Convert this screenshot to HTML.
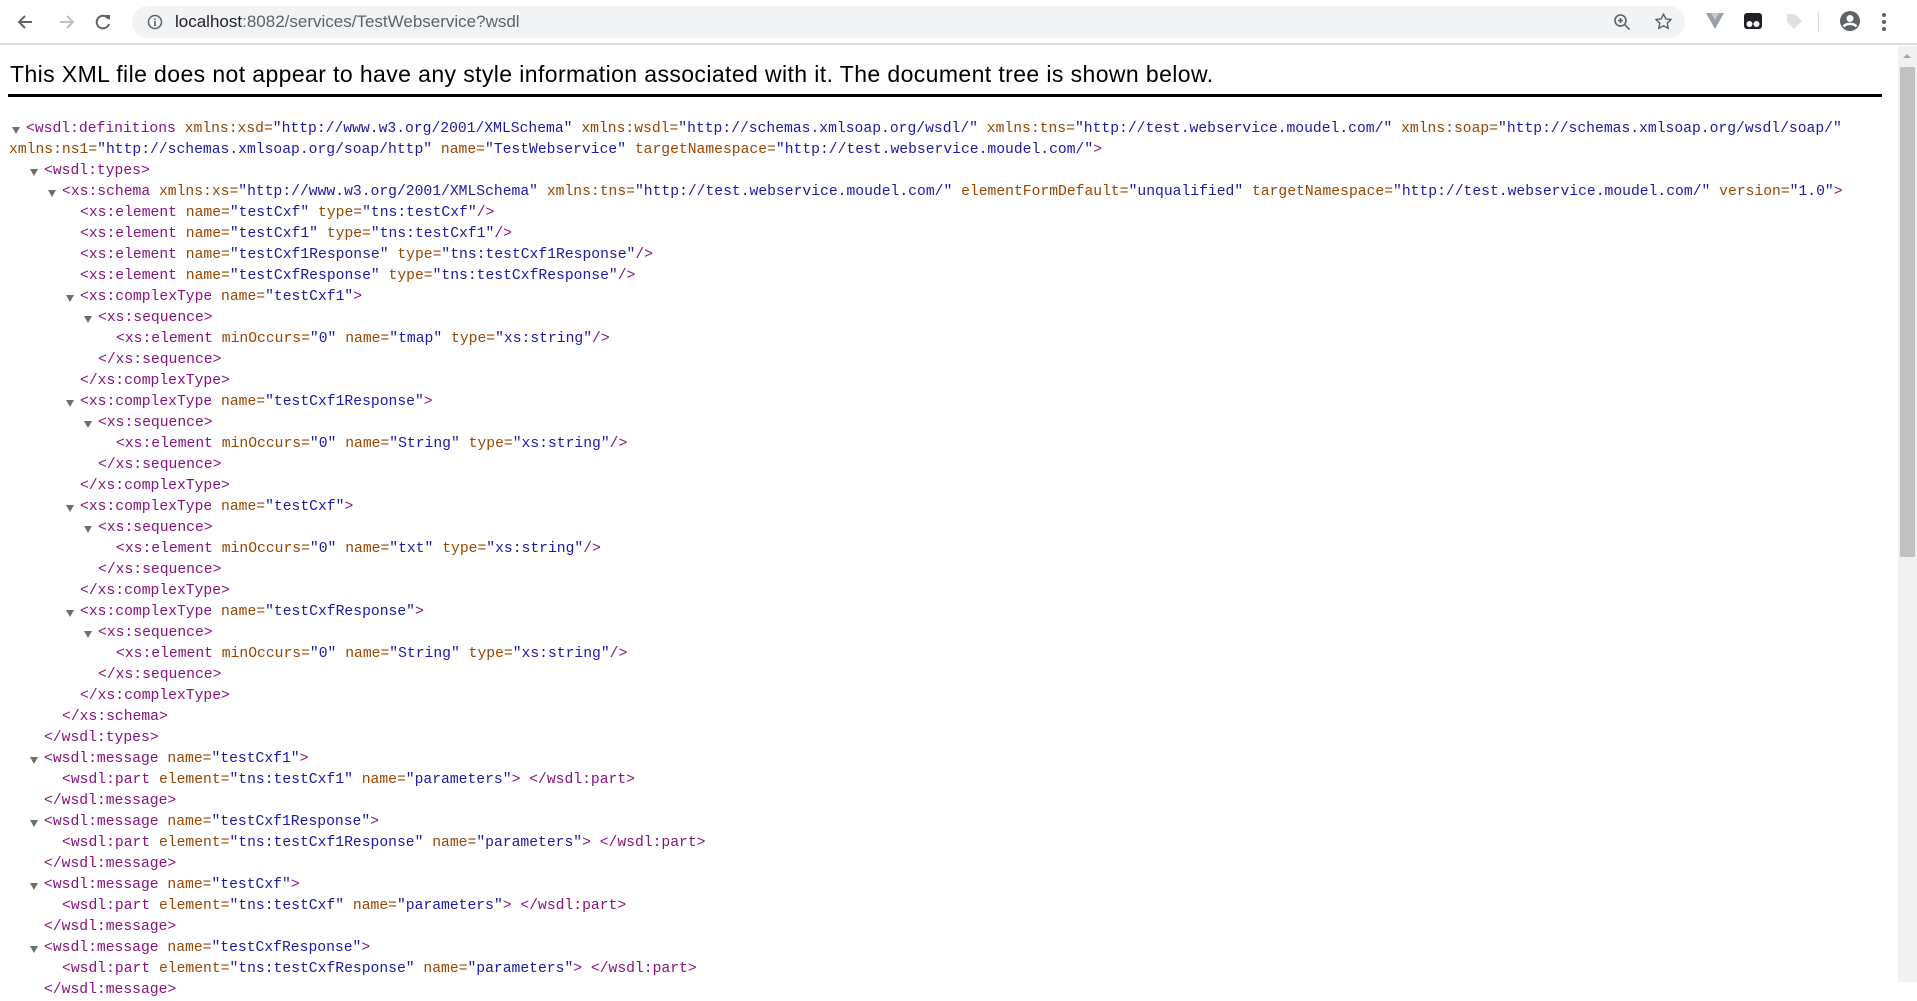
<!DOCTYPE html>
<html><head><meta charset="utf-8"><style>
*{margin:0;padding:0;box-sizing:border-box}
body{width:1917px;height:982px;overflow:hidden;background:#fff;position:relative;font-family:"Liberation Sans",sans-serif}
.bar{position:absolute;left:0;top:0;width:1917px;height:45px;background:#fff;border-bottom:2px solid #dadce0}
.pill{position:absolute;left:132px;top:6px;width:1553px;height:32px;border-radius:16px;background:#f1f3f4}
.url{position:absolute;left:175px;top:10px;font-size:17px;color:#202124;line-height:24px}
.url span{color:#5f6368}
.ic{position:absolute}
h1{position:absolute;left:10px;top:61px;font-weight:normal;font-size:23px;color:#000;white-space:nowrap;letter-spacing:0.4px}
.rule{position:absolute;left:8px;top:94px;width:1874px;height:3px;background:#000}
.sb{position:absolute;left:1898px;top:46px;width:19px;height:936px;background:#f1f1f1}
.thumb{position:absolute;left:1900px;top:67px;width:15px;height:490px;background:#c1c1c1}
.code{position:absolute;left:0;top:118.5px;font-family:"Liberation Mono",monospace;font-size:14.7px;line-height:21px;white-space:nowrap;color:#881280}
.l{position:relative;height:21px}
.t{position:absolute;width:0;height:0;border-left:4px solid transparent;border-right:4px solid transparent;border-top:7px solid #6e6e6e;top:8px}
.a{color:#994500}.v{color:#1a1aa6}
</style></head><body>
<div class="bar">
<svg class="ic" style="left:16px;top:13px" width="18" height="18" viewBox="0 0 18 18"><path d="M16 9H3M9 3L3 9l6 6" stroke="#5f6368" stroke-width="2" fill="none"/></svg>
<svg class="ic" style="left:58px;top:13px" width="18" height="18" viewBox="0 0 18 18"><path d="M2 9h13M9 3l6 6-6 6" stroke="#bdc1c6" stroke-width="2" fill="none"/></svg>
<svg class="ic" style="left:94px;top:13px" width="18" height="18" viewBox="0 0 18 18"><path d="M14.5 6A6.3 6.3 0 1 0 15 11" stroke="#5f6368" stroke-width="2" fill="none"/><path d="M11 2h5v5z" fill="#5f6368"/></svg>
<div class="pill"></div>
<svg class="ic" style="left:147px;top:14px" width="16" height="16" viewBox="0 0 16 16"><circle cx="8" cy="8" r="6.5" stroke="#5f6368" stroke-width="1.5" fill="none"/><path d="M8 7v5M8 4.5v1.5" stroke="#5f6368" stroke-width="1.6"/></svg>
<div class="url">localhost<span>:8082/services/TestWebservice?wsdl</span></div>
<svg class="ic" style="left:1613px;top:13px" width="18" height="18" viewBox="0 0 18 18"><circle cx="7.5" cy="7.5" r="5.5" stroke="#5f6368" stroke-width="1.6" fill="none"/><path d="M11.5 11.5l5 5M7.5 5v5M5 7.5h5" stroke="#5f6368" stroke-width="1.6"/></svg>
<svg class="ic" style="left:1654px;top:12px" width="19" height="19" viewBox="0 0 24 24"><path d="M12 2.5l2.9 6.3 6.8.7-5.1 4.6 1.5 6.8L12 17.4l-6.1 3.5 1.5-6.8-5.1-4.6 6.8-.7z" stroke="#5f6368" stroke-width="1.8" fill="none" stroke-linejoin="round"/></svg>
<svg class="ic" style="left:1705px;top:12px" width="20" height="18" viewBox="0 0 20 18"><path d="M1 1h18L10 17z" fill="#9aa0a6"/><path d="M6 1h8l-4 7z" fill="#c6c9cc"/></svg>
<svg class="ic" style="left:1743px;top:11px" width="20" height="20" viewBox="0 0 20 20"><rect x="1" y="2" width="18" height="16" rx="3" fill="#202124"/><circle cx="6.5" cy="13" r="3" fill="#fff"/><circle cx="13.5" cy="13" r="3" fill="#fff"/></svg>
<svg class="ic" style="left:1784px;top:11px" width="20" height="20" viewBox="0 0 20 20"><path d="M3 3h8l7 7-8 8-7-7z" fill="#e0e0e0"/></svg>
<div class="ic" style="left:1818px;top:12px;width:1px;height:20px;background:#dadce0"></div>
<svg class="ic" style="left:1839px;top:10px" width="22" height="22" viewBox="0 0 22 22"><circle cx="11" cy="11" r="10" fill="#5f6368"/><circle cx="11" cy="8.5" r="3.5" fill="#fff"/><path d="M4.5 16.5c3-3.5 10-3.5 13 0" stroke="#fff" stroke-width="2.5" fill="none"/></svg>
<svg class="ic" style="left:1881px;top:12px" width="6" height="20" viewBox="0 0 6 20"><circle cx="3" cy="3" r="2" fill="#5f6368"/><circle cx="3" cy="10" r="2" fill="#5f6368"/><circle cx="3" cy="17" r="2" fill="#5f6368"/></svg>
</div>
<h1>This XML file does not appear to have any style information associated with it. The document tree is shown below.</h1>
<div class="rule"></div>
<div class="sb"></div>
<svg class="ic" style="left:1902px;top:53px" width="10" height="6" viewBox="0 0 10 6"><path d="M1 5l4-4 4 4z" fill="#a3a3a3"/></svg>
<div class="thumb"></div>
<div class="code">
<div class="l" style="padding-left:26px"><i class="t" style="left:12px"></i>&lt;wsdl:definitions <span class="a">xmlns:xsd=</span><span class="v">"http://www.w3.org/2001/XMLSchema"</span> <span class="a">xmlns:wsdl=</span><span class="v">"http://schemas.xmlsoap.org/wsdl/"</span> <span class="a">xmlns:tns=</span><span class="v">"http://test.webservice.moudel.com/"</span> <span class="a">xmlns:soap=</span><span class="v">"http://schemas.xmlsoap.org/wsdl/soap/"</span></div>
<div class="l" style="padding-left:9px"><span class="a">xmlns:ns1=</span><span class="v">"http://schemas.xmlsoap.org/soap/http"</span> <span class="a">name=</span><span class="v">"TestWebservice"</span> <span class="a">targetNamespace=</span><span class="v">"http://test.webservice.moudel.com/"</span>&gt;</div>
<div class="l" style="padding-left:44px"><i class="t" style="left:30px"></i>&lt;wsdl:types&gt;</div>
<div class="l" style="padding-left:62px"><i class="t" style="left:48px"></i>&lt;xs:schema <span class="a">xmlns:xs=</span><span class="v">"http://www.w3.org/2001/XMLSchema"</span> <span class="a">xmlns:tns=</span><span class="v">"http://test.webservice.moudel.com/"</span> <span class="a">elementFormDefault=</span><span class="v">"unqualified"</span> <span class="a">targetNamespace=</span><span class="v">"http://test.webservice.moudel.com/"</span> <span class="a">version=</span><span class="v">"1.0"</span>&gt;</div>
<div class="l" style="padding-left:80px">&lt;xs:element <span class="a">name=</span><span class="v">"testCxf"</span> <span class="a">type=</span><span class="v">"tns:testCxf"</span>/&gt;</div>
<div class="l" style="padding-left:80px">&lt;xs:element <span class="a">name=</span><span class="v">"testCxf1"</span> <span class="a">type=</span><span class="v">"tns:testCxf1"</span>/&gt;</div>
<div class="l" style="padding-left:80px">&lt;xs:element <span class="a">name=</span><span class="v">"testCxf1Response"</span> <span class="a">type=</span><span class="v">"tns:testCxf1Response"</span>/&gt;</div>
<div class="l" style="padding-left:80px">&lt;xs:element <span class="a">name=</span><span class="v">"testCxfResponse"</span> <span class="a">type=</span><span class="v">"tns:testCxfResponse"</span>/&gt;</div>

<div class="l" style="padding-left:80px"><i class="t" style="left:66px"></i>&lt;xs:complexType <span class="a">name=</span><span class="v">"testCxf1"</span>&gt;</div>
<div class="l" style="padding-left:98px"><i class="t" style="left:84px"></i>&lt;xs:sequence&gt;</div>
<div class="l" style="padding-left:116px">&lt;xs:element <span class="a">minOccurs=</span><span class="v">"0"</span> <span class="a">name=</span><span class="v">"tmap"</span> <span class="a">type=</span><span class="v">"xs:string"</span>/&gt;</div>
<div class="l" style="padding-left:98px">&lt;/xs:sequence&gt;</div>
<div class="l" style="padding-left:80px">&lt;/xs:complexType&gt;</div>

<div class="l" style="padding-left:80px"><i class="t" style="left:66px"></i>&lt;xs:complexType <span class="a">name=</span><span class="v">"testCxf1Response"</span>&gt;</div>
<div class="l" style="padding-left:98px"><i class="t" style="left:84px"></i>&lt;xs:sequence&gt;</div>
<div class="l" style="padding-left:116px">&lt;xs:element <span class="a">minOccurs=</span><span class="v">"0"</span> <span class="a">name=</span><span class="v">"String"</span> <span class="a">type=</span><span class="v">"xs:string"</span>/&gt;</div>
<div class="l" style="padding-left:98px">&lt;/xs:sequence&gt;</div>
<div class="l" style="padding-left:80px">&lt;/xs:complexType&gt;</div>

<div class="l" style="padding-left:80px"><i class="t" style="left:66px"></i>&lt;xs:complexType <span class="a">name=</span><span class="v">"testCxf"</span>&gt;</div>
<div class="l" style="padding-left:98px"><i class="t" style="left:84px"></i>&lt;xs:sequence&gt;</div>
<div class="l" style="padding-left:116px">&lt;xs:element <span class="a">minOccurs=</span><span class="v">"0"</span> <span class="a">name=</span><span class="v">"txt"</span> <span class="a">type=</span><span class="v">"xs:string"</span>/&gt;</div>
<div class="l" style="padding-left:98px">&lt;/xs:sequence&gt;</div>
<div class="l" style="padding-left:80px">&lt;/xs:complexType&gt;</div>

<div class="l" style="padding-left:80px"><i class="t" style="left:66px"></i>&lt;xs:complexType <span class="a">name=</span><span class="v">"testCxfResponse"</span>&gt;</div>
<div class="l" style="padding-left:98px"><i class="t" style="left:84px"></i>&lt;xs:sequence&gt;</div>
<div class="l" style="padding-left:116px">&lt;xs:element <span class="a">minOccurs=</span><span class="v">"0"</span> <span class="a">name=</span><span class="v">"String"</span> <span class="a">type=</span><span class="v">"xs:string"</span>/&gt;</div>
<div class="l" style="padding-left:98px">&lt;/xs:sequence&gt;</div>
<div class="l" style="padding-left:80px">&lt;/xs:complexType&gt;</div>

<div class="l" style="padding-left:62px">&lt;/xs:schema&gt;</div>
<div class="l" style="padding-left:44px">&lt;/wsdl:types&gt;</div>

<div class="l" style="padding-left:44px"><i class="t" style="left:30px"></i>&lt;wsdl:message <span class="a">name=</span><span class="v">"testCxf1"</span>&gt;</div>
<div class="l" style="padding-left:62px">&lt;wsdl:part <span class="a">element=</span><span class="v">"tns:testCxf1"</span> <span class="a">name=</span><span class="v">"parameters"</span>&gt; &lt;/wsdl:part&gt;</div>
<div class="l" style="padding-left:44px">&lt;/wsdl:message&gt;</div>
<div class="l" style="padding-left:44px"><i class="t" style="left:30px"></i>&lt;wsdl:message <span class="a">name=</span><span class="v">"testCxf1Response"</span>&gt;</div>
<div class="l" style="padding-left:62px">&lt;wsdl:part <span class="a">element=</span><span class="v">"tns:testCxf1Response"</span> <span class="a">name=</span><span class="v">"parameters"</span>&gt; &lt;/wsdl:part&gt;</div>
<div class="l" style="padding-left:44px">&lt;/wsdl:message&gt;</div>
<div class="l" style="padding-left:44px"><i class="t" style="left:30px"></i>&lt;wsdl:message <span class="a">name=</span><span class="v">"testCxf"</span>&gt;</div>
<div class="l" style="padding-left:62px">&lt;wsdl:part <span class="a">element=</span><span class="v">"tns:testCxf"</span> <span class="a">name=</span><span class="v">"parameters"</span>&gt; &lt;/wsdl:part&gt;</div>
<div class="l" style="padding-left:44px">&lt;/wsdl:message&gt;</div>
<div class="l" style="padding-left:44px"><i class="t" style="left:30px"></i>&lt;wsdl:message <span class="a">name=</span><span class="v">"testCxfResponse"</span>&gt;</div>
<div class="l" style="padding-left:62px">&lt;wsdl:part <span class="a">element=</span><span class="v">"tns:testCxfResponse"</span> <span class="a">name=</span><span class="v">"parameters"</span>&gt; &lt;/wsdl:part&gt;</div>
<div class="l" style="padding-left:44px">&lt;/wsdl:message&gt;</div>
</div>
</body></html>
